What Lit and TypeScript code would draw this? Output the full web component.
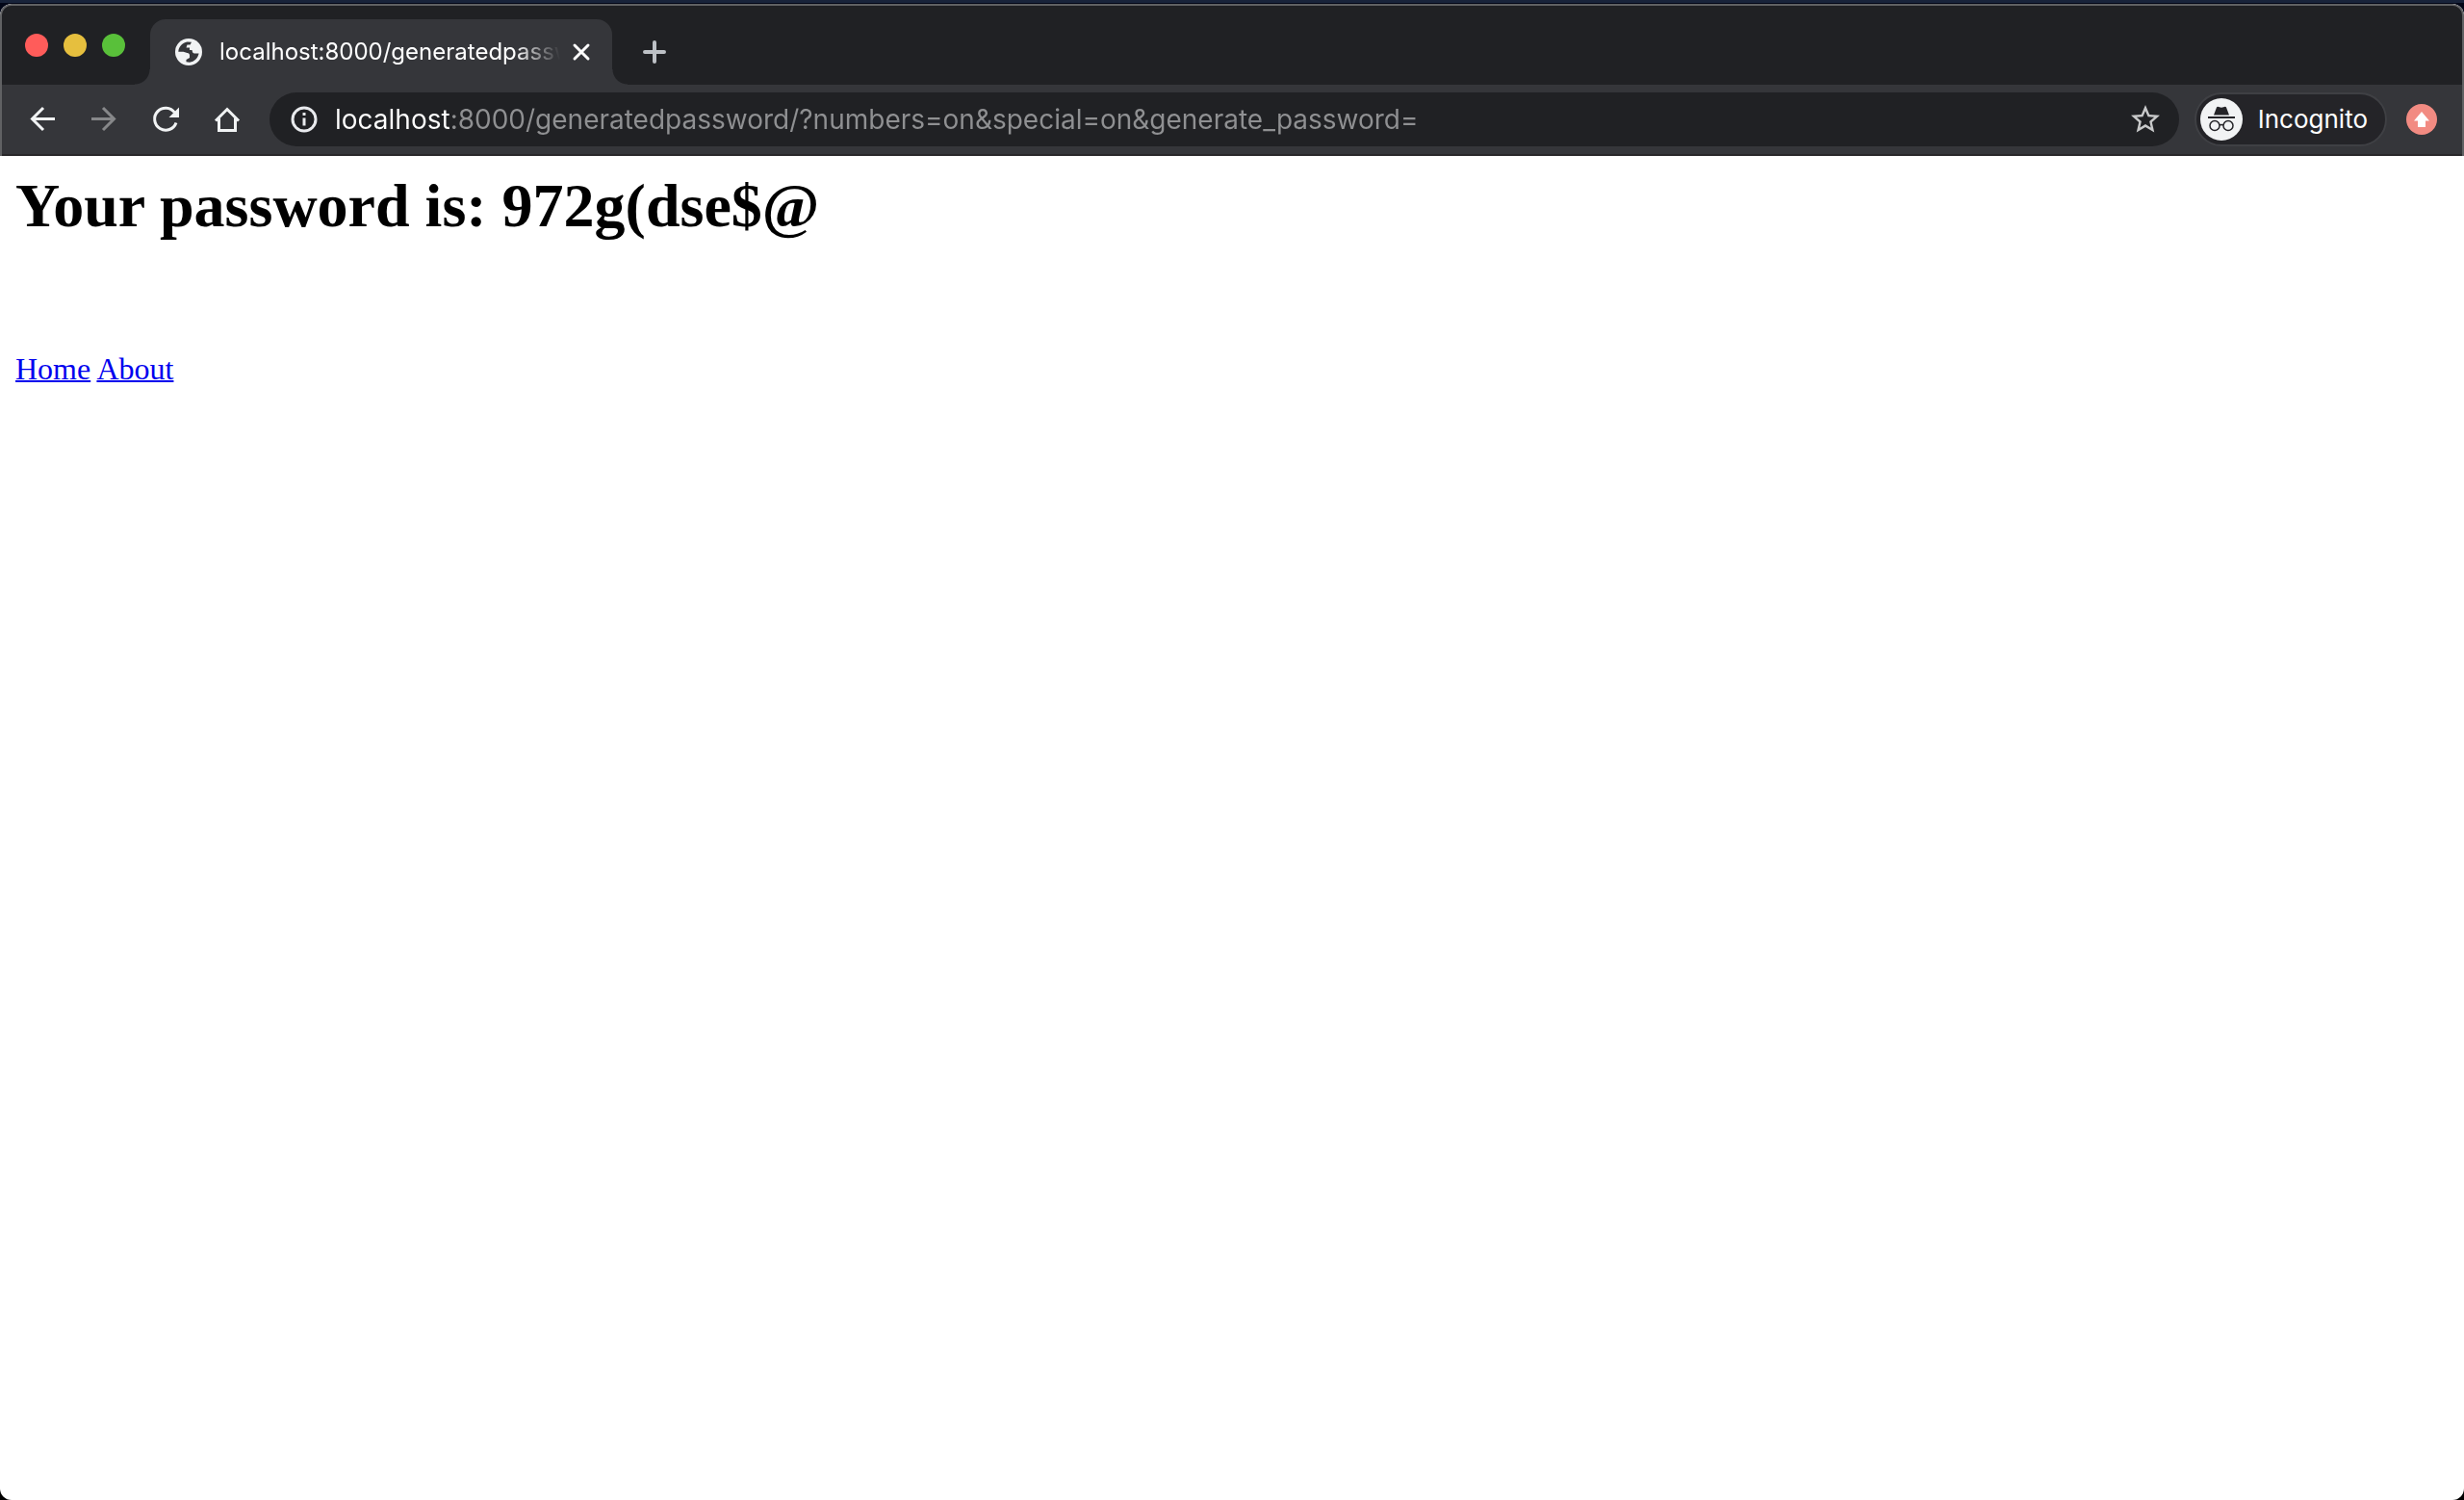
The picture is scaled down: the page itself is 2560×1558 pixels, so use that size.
import { LitElement, html, css } from "lit";
import { customElement } from "lit/decorators.js";

@customElement("browser-tab")
class BrowserTab extends LitElement {
  static styles = css`
    :host { display: flex; }
    .tab {
      display: flex;
      align-items: center;
      box-sizing: border-box;
      width: 480px;
      padding: 0 20px 0 26px;
      border-radius: 16px 16px 0 0;
      background: #35363a;
      position: relative;
    }
    .tab::before, .tab::after {
      content: "";
      position: absolute;
      bottom: 0;
      width: 16px;
      height: 16px;
    }
    .tab::before {
      right: 100%;
      background: radial-gradient(circle at 0 0, transparent 15px, #35363a 16px);
    }
    .tab::after {
      left: 100%;
      background: radial-gradient(circle at 100% 0, transparent 15px, #35363a 16px);
    }
    button { border: 0; padding: 0; background: none; color: #fff; font: inherit; display: flex; align-items: center; }
    .select { flex: 1; min-width: 0; gap: 18px; font: 24px/32px Inter, sans-serif; }
    .select svg { flex: none; }
    .title {
      flex: 1;
      min-width: 0;
      overflow: hidden;
      white-space: nowrap;
      text-align: left;
      mask-image: linear-gradient(to right, #000 calc(100% - 48px), transparent);
    }
    .close { margin-left: 10px; }
  `;
  render() {
    return html`<div class="tab">
      <button class="select">
        <svg width="28" height="28" viewBox="0 0 28 28" aria-hidden="true">
          <circle cx="14" cy="14" r="14" fill="#f1f3f4"/>
          <path fill="#35363a" d="M3.300 13.800C3.600 8.500 7.500 4.200 12.500 3.500L17 3.800 15.500 6.500H12.500L11.500 9.500H15V12H17.500Q18 15.500 20 15.500H24.600C23.500 20.500 20 24 15 24.700L11.500 24.300V22L15 20V17.500Q15 15 12.500 15L8.500 13.800z"/>
        </svg>
        <span class="title">localhost:8000/generatedpassword</span>
      </button>
      <button class="close" aria-label="Close tab">
        <svg width="24" height="24" viewBox="0 0 24 24" stroke="#fff" stroke-width="3" stroke-linecap="round"><path d="M5 5 19 19M19 5 5 19"/></svg>
      </button>
    </div>`;
  }
}

@customElement("app-root")
class AppRoot extends LitElement {
  static styles = css`
    :host {
      display: flex;
      flex-direction: column;
      box-sizing: border-box;
      min-height: 100vh;
      padding-top: 4px;
      background: linear-gradient(#18233a 0 3px, #020617 3px 40px, #000 40px);
    }
    .window {
      flex: 1;
      display: flex;
      flex-direction: column;
      border-radius: 12px;
      overflow: hidden;
      background: #fff;
    }
    .chrome {
      border: solid #606163;
      border-width: 2px 2px 0;
      border-radius: 12px 12px 0 0;
      background: #35363a;
      overflow: hidden;
    }
    .strip { display: flex; align-items: stretch; height: 82px; box-sizing: border-box; padding: 14px 24px 0; background: #202124; }
    .lights { display: flex; gap: 16px; padding-top: 15px; margin-right: 26px; }
    .lights button { width: 24px; height: 24px; border-radius: 50%; }
    .red { background: #ff5c5a; }
    .yellow { background: #e6bf3e; }
    .green { background: #59c03a; }
    button { border: 0; padding: 0; background: none; font: inherit; color: inherit; }
    svg { display: block; }
    .new { margin: 0 0 0 30px; }
    .toolbar {
      display: flex;
      align-items: center;
      height: 74px;
      box-sizing: border-box;
      padding: 0 26px 0 22px;
      border-bottom: 2px solid #29282a;
      color: #fff;
      font: 28px/56px Inter, sans-serif;
    }
    .nav { display: flex; gap: 24px; margin-right: 24px; }
    .omnibox {
      flex: 1;
      min-width: 0;
      display: flex;
      align-items: center;
      gap: 18px;
      height: 56px;
      padding: 0 20px 0 22px;
      box-sizing: border-box;
      border-radius: 28px;
      background: #202124;
    }
    .omnibox input {
      flex: 1;
      min-width: 0;
      height: 56px;
      padding: 0;
      border: 0;
      outline: 0;
      font: inherit;
      color: transparent;
      background: linear-gradient(to right, #fff 122px, #8f9092 122px);
      background-clip: text;
      -webkit-background-clip: text;
    }
    .profile {
      display: flex;
      align-items: center;
      gap: 16px;
      box-sizing: border-box;
      height: 56px;
      margin: 0 20px 0 16px;
      padding: 0 18px 0 4px;
      border: 2px solid #3f4044;
      border-radius: 28px;
      background: #242428;
      font-size: 26px;
    }
    main { padding: 14px 16px; color: #000; font: 32px/36px "Liberation Serif", serif; }
    h1 { margin: 0 0 113px; font-size: 64px; line-height: 76px; }
    a { color: #0000ee; text-decoration-thickness: 2px; }
  `;
  render() {
    return html`<div class="window">
      <header class="chrome">
        <div class="strip">
          <div class="lights">
            <button class="red" aria-label="Close window"></button>
            <button class="yellow" aria-label="Minimise window"></button>
            <button class="green" aria-label="Zoom window"></button>
          </div>
          <browser-tab></browser-tab>
          <button class="new" aria-label="New tab">
            <svg width="28" height="28" viewBox="0 0 28 28" stroke="#bdc1c6" stroke-width="4" stroke-linecap="round"><path d="M14 4V24M4 14H24"/></svg>
          </button>
        </div>
        <div class="toolbar">
          <nav class="nav">
            <button aria-label="Back"><svg width="40" height="40" viewBox="0 0 40 40" fill="none" stroke="#f1f3f4" stroke-width="3"><path d="M33 19.500H9M21 8 9.500 19.500 21 31"/></svg></button>
            <button aria-label="Forward" disabled><svg width="40" height="40" viewBox="0 0 40 40" fill="none" stroke="#87888a" stroke-width="3"><path d="M7 19.500H31M19 8 30.500 19.500 19 31"/></svg></button>
            <button aria-label="Reload"><svg width="40" height="40" viewBox="0 0 40 40" fill="none" stroke="#f1f3f4" stroke-width="3"><path d="M29.500 13A11.500 11.500 0 1 0 31 23.500"/><path fill="#f1f3f4" stroke="none" d="M34 7.500V18H23.500z"/></svg></button>
            <button aria-label="Home"><svg width="40" height="40" viewBox="0 0 40 40" fill="none" stroke="#f1f3f4" stroke-width="3"><path d="M8 21.500 20 9.500 32 21.500M11.500 19V31.500H28.500V19"/></svg></button>
          </nav>
          <div class="omnibox">
            <svg width="28" height="28" viewBox="0 0 28 28" fill="none" stroke="#e8eaed" stroke-width="3"><circle cx="14" cy="14" r="12"/><path d="M14 12.500V20.500M14 7V10"/></svg>
            <input aria-label="Address" spellcheck="false" value="localhost:8000/generatedpassword/?numbers=on&amp;special=on&amp;generate_password=">
            <button aria-label="Bookmark this page"><svg width="30" height="30" viewBox="2 2 20 20" fill="#c8c9ca"><path d="M22 9.240l-7.190-.620L12 2 9.190 8.630 2 9.240l5.460 4.730L5.820 21 12 17.270 18.180 21l-1.630-7.030L22 9.240zM12 15.400l-3.760 2.270 1-4.280-3.320-2.880 4.380-.380L12 6.100l1.710 4.040 4.380.380-3.320 2.880 1 4.280L12 15.400z"/></svg></button>
          </div>
          <button class="profile">
            <svg width="44" height="44" viewBox="0 0 44 44" fill="none" aria-hidden="true"><circle cx="22" cy="22" r="22" fill="#f1f3f4"/><path fill="#242428" d="M14 17.500 17 9.500Q17.500 8.500 19 9L22 9.800 25 9Q26.500 8.500 27 9.500L30 17.500z"/><path stroke="#242428" stroke-width="2" d="M8 20H36"/><g stroke="#242428" stroke-width="1.500"><circle cx="15" cy="28.500" r="5"/><circle cx="29" cy="28.500" r="5"/><path d="M20 28Q22 27 24 28"/></g></svg>
            <span>Incognito</span>
          </button>
          <button aria-label="Update available"><svg width="32" height="32" viewBox="0 0 32 32"><circle cx="16" cy="16" r="16" fill="#f28b82"/><path fill="#fff" d="M16 8 24 17.500H20V24H12V17.500H8z"/></svg></button>
        </div>
      </header>
      <main>
        <h1>Your password is: 972g(dse$@</h1>
        <a href="/">Home</a> <a href="/about/">About</a>
      </main>
    </div>`;
  }
}
